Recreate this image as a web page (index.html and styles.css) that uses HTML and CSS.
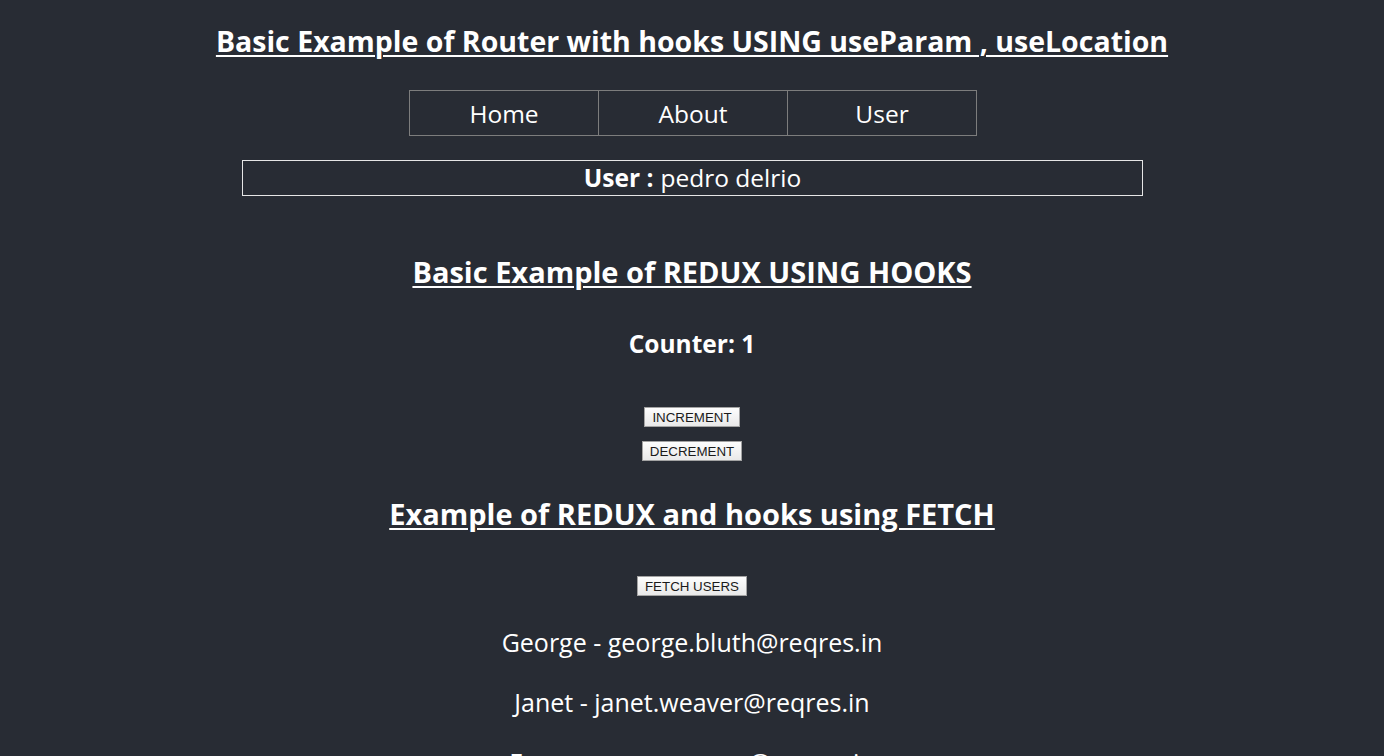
FILE: index.html
```html
<!DOCTYPE html>
<html lang="en">
<head>
<meta charset="utf-8">
<title>React App</title>
<link rel="stylesheet" href="styles.css">
</head>
<body>
<div class="app">
  <h1 class="title">Basic Example of Router with hooks USING useParam , useLocation</h1>
  <nav class="nav">
    <a class="nav-link" href="#">Home</a>
    <a class="nav-link" href="#">About</a>
    <a class="nav-link" href="#">User</a>
  </nav>
  <div class="user-box"><strong>User :</strong> pedro delrio</div>

  <h3 class="section-title redux-title">Basic Example of REDUX USING HOOKS</h3>
  <h4 class="counter">Counter: 1</h4>
  <div class="buttons">
    <button class="btn">INCREMENT</button>
    <button class="btn">DECREMENT</button>
  </div>

  <h3 class="section-title fetch-title">Example of REDUX and hooks using FETCH</h3>
  <div class="buttons fetch-buttons">
    <button class="btn">FETCH USERS</button>
  </div>
  <div class="users">
    <p class="user">George - george.bluth@reqres.in</p>
    <p class="user">Janet - janet.weaver@reqres.in</p>
    <p class="user">Emma - emma.wong@reqres.in</p>
  </div>
</div>
</body>
</html>
```
FILE: styles.css
```css
html, body {
  margin: 0;
  padding: 0;
  background: #282c34;
}
body {
  color: #ffffff;
  font-family: "Open Sans", "Noto Sans", sans-serif;
}
.app {
  display: flex;
  flex-direction: column;
  align-items: center;
  text-align: center;
  padding-top: 20px;
}
.title {
  margin: 0;
  font-size: 28.5px;
  line-height: 42px;
  font-weight: 700;
  text-decoration: underline;
  text-underline-offset: 3px;
  text-decoration-thickness: 2px;
}
.nav {
  margin-top: 28px;
  margin-left: 2px;
  display: flex;
}
.nav-link {
  display: flex;
  align-items: center;
  justify-content: center;
  width: 188px;
  height: 44px;
  border: 1px solid #7d7d7d;
  color: #ffffff;
  text-decoration: none;
  font-size: 24.5px;
}
.nav-link + .nav-link {
  margin-left: -1px;
}
.user-box {
  margin-top: 24px;
  margin-left: 1px;
  width: 899px;
  height: 34px;
  border: 1px solid #e6e6e6;
  display: flex;
  align-items: center;
  justify-content: center;
  gap: 7px;
  font-size: 24.5px;
  line-height: 34px;
}
.user-box strong {
  font-weight: 700;
}
.section-title {
  margin: 0;
  font-size: 29px;
  line-height: 38px;
  font-weight: 700;
  text-decoration: underline;
  text-underline-offset: 3px;
  text-decoration-thickness: 2px;
}
.redux-title {
  margin-top: 57px;
}
.counter {
  margin: 36px 0 0;
  font-size: 24.5px;
  line-height: 34px;
  font-weight: 700;
}
.buttons {
  margin-top: 46px;
  display: flex;
  flex-direction: column;
  align-items: center;
  gap: 14px;
}
.btn {
  font-family: "Liberation Sans", Arial, sans-serif;
  font-size: 13.33px;
  line-height: 15px;
  color: #1a1a1a;
  padding: 1px 7px;
  height: 20px;
  background: linear-gradient(#fdfdfd, #e9e9e9);
  border: 1px solid #a3a3a3;
  border-radius: 0;
}
.fetch-title {
  margin-top: 34px;
}
.fetch-buttons {
  margin-top: 43px;
}
.users {
  margin-top: 29px;
  display: flex;
  flex-direction: column;
  gap: 26px;
}
.user {
  margin: 0;
  font-size: 25px;
  line-height: 34px;
}
```
